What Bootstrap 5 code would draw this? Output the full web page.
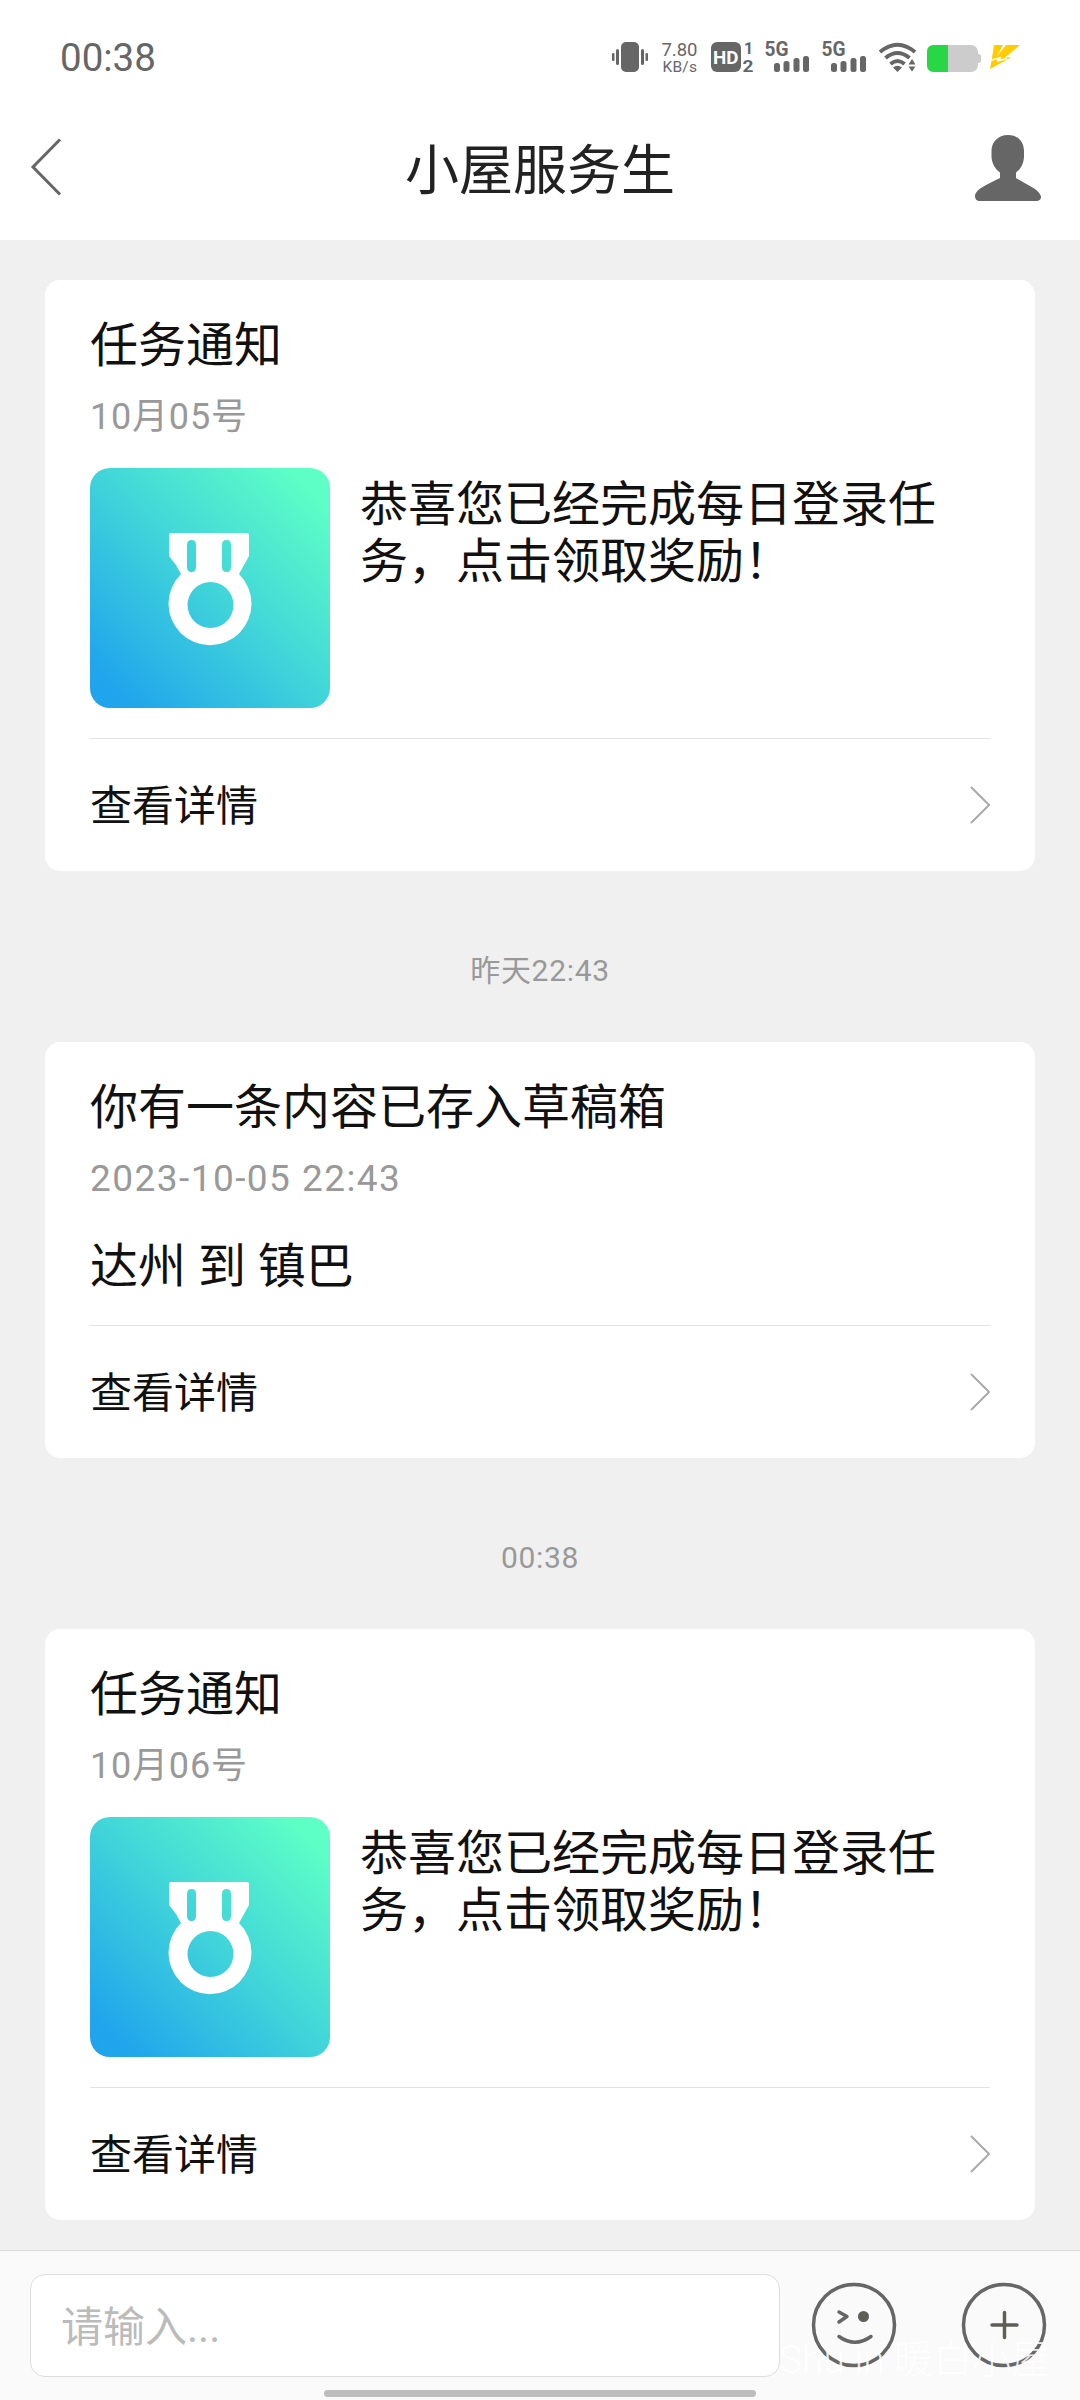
<!DOCTYPE html>
<html lang="zh-CN">
<head>
<meta charset="utf-8">
<meta name="viewport" content="width=device-width, initial-scale=1">
<title>小屋服务生</title>
<link href="https://cdn.jsdelivr.net/npm/bootstrap@5.3.0/dist/css/bootstrap.min.css" rel="stylesheet">
<style>
  body { font-family: Roboto, "Noto Sans CJK SC", sans-serif; background: #f0f0f0; color: #111; }
  svg { display: block; flex: none; overflow: visible; }
  .phone { width: 1080px; height: 2400px; }
  .status { height: 100px; padding: 14px 60px 0 60px; color: #666; }
  .clock { font-size: 38.5px; line-height: 40px; }
  .status-icons { width: 408px; margin-top: 17px; }
  .titlebar { height: 140px; padding: 0 39px 0 30px; }
  .titlebar h1 { font-size: 54px; line-height: 60px; color: #222; font-weight: 400; padding: 4px 0 0 9px; }
  .back-icon { margin-top: -6px; }
  .user-icon { margin-top: -5px; }
  .feed { padding: 40px 45px 0; }
  .notice { --bs-card-border-width: 0; --bs-card-border-radius: 15px; --bs-card-inner-border-radius: 15px; color: #111; padding: 0 45px; }
  .notice-title { font-size: 48px; line-height: 60px; padding-top: 36px; font-weight: 400; }
  .notice-date { font-size: 36px; line-height: 48px; margin-top: 17px; color: #999; letter-spacing: .8px; }
  .notice-datetime { font-size: 37px; letter-spacing: 1.45px; }
  .notice-body { font-size: 48px; line-height: 57px; }
  .task-body { margin-top: 27px; gap: 30px; height: 240px; }
  .task-body p { padding-top: 8px; }
  .draft-body { margin-top: 35px; }
  .detail { margin-top: 30px; border-top: 1px solid #e3e3e3; height: 133px; font-size: 42px; color: #111; text-decoration: none; }
  .detail span { padding-top: 3px; }
  .stamp { height: 171px; font-size: 30px; color: #999; padding-top: 28px; letter-spacing: .7px; }
  .composer { height: 150px; background: #fafafa; border-top: 1px solid #dcdcdc; padding: 23px 34px 0 0; }
  .edge-line { width: 1px; height: 92px; background: #ddd; margin-top: 5px; }
  .entry { width: 750px; height: 103px; margin-left: 30px; border: 1px solid #dedede; border-radius: 15px; font-size: 42px; padding: 4px 31px 0 30px; background: #fff; }
  .entry::placeholder { color: #bbb; opacity: 1; }
  .face { margin: 8px 0 0 31px; }
  .more { margin: 8px 0 0 64px; }
  .home-bar { left: 324px; top: 2390px; width: 432px; height: 7px; border-radius: 4px; background: #bdbdbd; }
  .watermark { left: 779px; top: 2336px; font-size: 39px; line-height: 48px; color: #fff; opacity: .85; white-space: nowrap; font-weight: 300; }
</style>
<script src="https://cdn.jsdelivr.net/npm/bootstrap@5.3.0/dist/js/bootstrap.bundle.min.js"></script>
</head>
<body>
<svg width="0" height="0" class="position-absolute" aria-hidden="true">
  <defs>
    <linearGradient id="tile" x1="0" y1="1" x2="1" y2="0">
      <stop offset="0" stop-color="#1fa2ee"/><stop offset=".1" stop-color="#21a6ec"/>
      <stop offset=".5" stop-color="#40d4da"/><stop offset=".92" stop-color="#5effc6"/><stop offset="1" stop-color="#60ffc6"/>
    </linearGradient>
    <symbol id="medal" viewBox="0 0 240 240">
      <rect width="240" height="240" rx="20" fill="url(#tile)"/>
      <path fill="#fff" fill-rule="evenodd" d="M81 65H157Q159 65 159 67V88L154 97L149 106A41.5 41.5 0 1 1 91 106L86 97L79 88V67Q79 65 81 65ZM101.500 72Q97 72 97 77V99Q97 104 101.500 104T106 99V77Q106 72 101.500 72ZM136.500 72Q132 72 132 77V99Q132 104 136.500 104T141 99V77Q141 72 136.500 72ZM120.500 114A23 23 0 1 0 120.500 160A23 23 0 1 0 120.500 114Z"/>
    </symbol>
    <symbol id="chev" viewBox="0 0 20 38"><path d="M1 1L19 19L1 37" fill="none" stroke="#aaa" stroke-width="2"/></symbol>
    <symbol id="signal" viewBox="0 0 45 32">
      <text x="-.5" y="15" font-family="Roboto" font-weight="700" font-size="19.500" textLength="24" lengthAdjust="spacingAndGlyphs" fill="#666">5G</text>
      <g fill="#666"><rect x="9" y="22" width="6" height="9" rx="2.500"/><rect x="18.500" y="20" width="6" height="11" rx="2.500"/><rect x="28.500" y="17" width="6" height="14" rx="2.500"/><rect x="38" y="15" width="6" height="16" rx="2.500"/></g>
    </symbol>
  </defs>
</svg>

<div class="phone position-relative d-flex flex-column overflow-hidden">
  <header class="bg-white">
    <div class="status d-flex justify-content-between align-items-start">
      <span class="clock mt-4">00:38</span>
      <svg class="status-icons" height="54" viewBox="612 31 408 54">
        <g fill="#666">
          <rect x="621" y="42" width="18" height="30" rx="5"/>
          <rect x="616" y="49" width="3" height="16" rx="1.500"/><rect x="612" y="53" width="2.500" height="8" rx="1"/>
          <rect x="641" y="49" width="3" height="16" rx="1.500"/><rect x="645.500" y="53" width="2.500" height="8" rx="1"/>
          <text x="661.500" y="56" font-family="Roboto" font-size="18.500" textLength="36">7.80</text>
          <text x="662.500" y="71.500" font-family="Roboto" font-size="15.500" textLength="34.500">KB/s</text>
          <rect x="711" y="42" width="30" height="30" rx="6"/>
          <text x="713" y="64" font-family="Roboto" font-weight="700" font-size="19" fill="#fff" textLength="25.500" lengthAdjust="spacingAndGlyphs">HD</text>
          <text x="744" y="54" font-family="Roboto" font-weight="700" font-size="16">1</text>
          <text x="742.500" y="71.500" font-family="Roboto" font-weight="700" font-size="17" textLength="11" lengthAdjust="spacingAndGlyphs">2</text>
        </g>
        <use href="#signal" x="765" y="41" width="45" height="32"/>
        <use href="#signal" x="822" y="41" width="45" height="32"/>
        <g fill="none" stroke="#666" stroke-width="4">
          <path d="M880 52Q897.500 37.500 915 52"/><path d="M885.500 58Q897.500 48 909.500 58"/><path d="M890.500 64Q897.500 58 904.500 64"/>
        </g>
        <path fill="#666" d="M893 67.500Q897.500 64 902 67.500L897.500 72ZM908.500 64.500L912 59L915.500 64.500ZM908.500 66.500H915.500L912 71.500Z"/>
        <rect x="927" y="45" width="51" height="27" rx="7" fill="#ccc"/><rect x="975" y="54" width="6" height="9" rx="2.500" fill="#ccc"/>
        <path fill="#29d746" d="M948 45H934Q927 45 927 52V65Q927 72 934 72H948Z"/>
        <path fill="#fc0" d="M994 45H1003L996.500 57L1006 45H1020L1005 57.500H1011L990 69L992 58Z"/>
        <path stroke="#fff" stroke-width="1.300" fill="none" d="M990 60.500L1001 57.500L997 61L1007 58.500"/>
      </svg>
    </div>
    <div class="titlebar d-flex justify-content-between align-items-center">
      <svg class="back-icon" width="66" height="58" viewBox="0 0 66 58"><path d="M30 1.500L3 29L30 56.500" fill="none" stroke="#666" stroke-width="3"/></svg>
      <h1 class="m-0">小屋服务生</h1>
      <svg class="user-icon" width="66" height="66" viewBox="0 0 66 66"><path fill="#666" d="M33 0C43 0 49 7 49 16V21C49 28 46 34 41 37.500V43C47 47 54 50 60 54C64 57 66 60 66 62Q66 65.500 62 66H4Q0 65.500 0 61C0 58 3 55 6 53C12 49 19 46 25 43V37.500C20 34 16.500 28 16.500 21V16C16.500 7 23 0 33 0Z"/></svg>
    </div>
  </header>

  <main class="feed flex-grow-1">
    <section class="card notice">
      <h2 class="notice-title m-0">任务通知</h2>
      <div class="notice-date">10月05号</div>
      <div class="notice-body task-body d-flex">
        <svg width="240" height="240"><use href="#medal"/></svg>
        <p class="m-0">恭喜您已经完成每日登录任<br>务，点击领取奖励！</p>
      </div>
      <a class="detail d-flex justify-content-between align-items-center" href="#"><span>查看详情</span><svg width="20" height="38"><use href="#chev"/></svg></a>
    </section>

    <div class="stamp d-flex justify-content-center align-items-center">昨天22:43</div>

    <section class="card notice">
      <h2 class="notice-title m-0">你有一条内容已存入草稿箱</h2>
      <div class="notice-date notice-datetime">2023-10-05 22:43</div>
      <div class="notice-body draft-body">达州 到 镇巴</div>
      <a class="detail d-flex justify-content-between align-items-center" href="#"><span>查看详情</span><svg width="20" height="38"><use href="#chev"/></svg></a>
    </section>

    <div class="stamp d-flex justify-content-center align-items-center">00:38</div>

    <section class="card notice">
      <h2 class="notice-title m-0">任务通知</h2>
      <div class="notice-date">10月06号</div>
      <div class="notice-body task-body d-flex">
        <svg width="240" height="240"><use href="#medal"/></svg>
        <p class="m-0">恭喜您已经完成每日登录任<br>务，点击领取奖励！</p>
      </div>
      <a class="detail d-flex justify-content-between align-items-center" href="#"><span>查看详情</span><svg width="20" height="38"><use href="#chev"/></svg></a>
    </section>
  </main>

  <footer class="composer d-flex align-items-start">
    <span class="edge-line"></span>
    <input class="form-control entry flex-shrink-0" type="text" placeholder="请输入...">
    <svg class="face" width="86" height="86" viewBox="-43 -43 86 86" fill="none" stroke="#666" stroke-width="3.500" stroke-linecap="round" stroke-linejoin="round">
      <circle r="40.500"/><path d="M-15 -13L-7 -8.500L-15 -3"/><circle cx="9.500" cy="-8.500" r="5.500" fill="#5f5f58" stroke="none"/><path d="M-15 11.500Q1 23 17 11.500"/>
    </svg>
    <svg class="more" width="86" height="86" viewBox="-43 -43 86 86" fill="none" stroke="#666" stroke-width="3.500" stroke-linecap="round">
      <circle r="40.500"/><path stroke="#5f5f58" d="M-12 0H13M.5 -12.500V12.500"/>
    </svg>
  </footer>
  <div class="watermark position-absolute">Shu in 暖白小屋</div>
  <div class="home-bar position-absolute"></div>
</div>
</body>
</html>
